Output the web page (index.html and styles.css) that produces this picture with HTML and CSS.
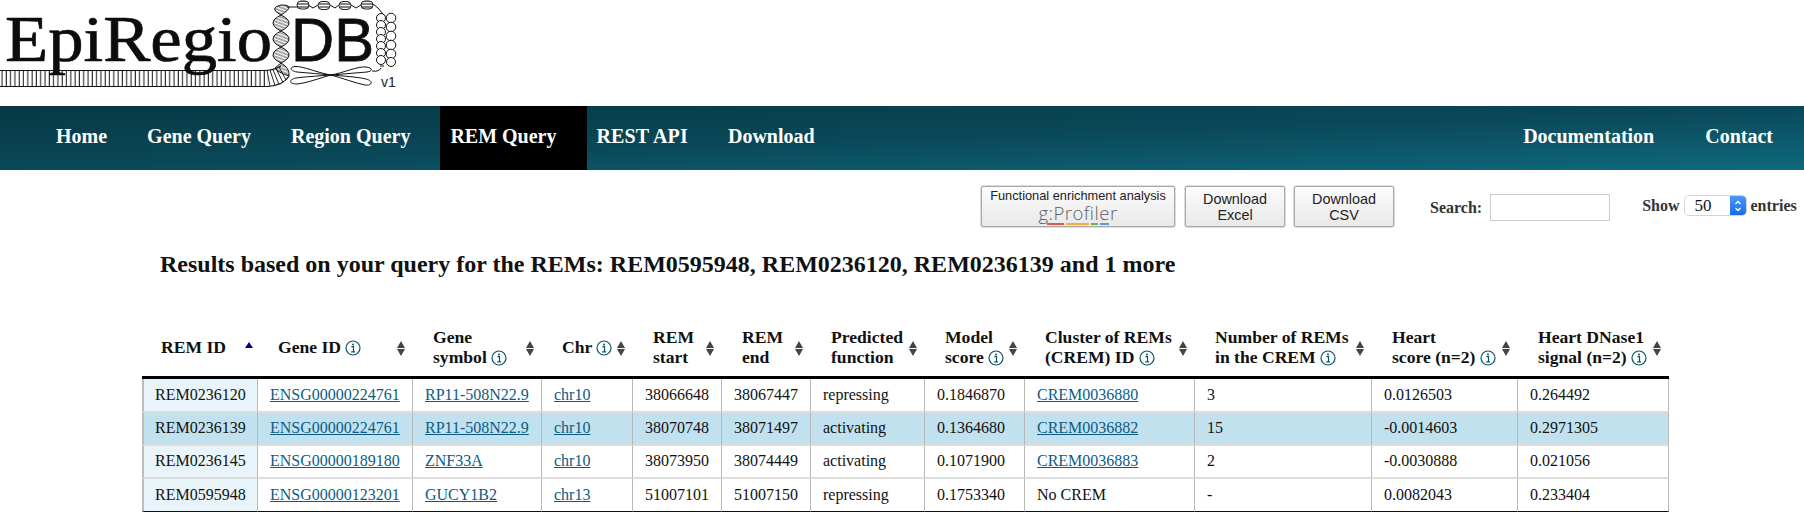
FILE: index.html
```html
<!DOCTYPE html>
<html lang="en">
<head>
<meta charset="utf-8">
<title>EpiRegioDB</title>
<link rel="stylesheet" href="styles.css">
</head>
<body>
<svg class="defs" width="0" height="0" aria-hidden="true">
  <defs>
    <pattern id="ladder" width="4.3" height="20" patternUnits="userSpaceOnUse"><line x1="2" y1="0" x2="2" y2="20" stroke="#111" stroke-width="1"/></pattern>
    <pattern id="hatch" width="3" height="3" patternUnits="userSpaceOnUse" patternTransform="rotate(20)"><line x1="0" y1="1" x2="3" y2="1" stroke="#222" stroke-width=".8"/></pattern>
    <pattern id="nuc" width="3" height="3" patternUnits="userSpaceOnUse"><line x1="0" y1="1" x2="3" y2="1" stroke="#333" stroke-width="1.2"/></pattern>
    <symbol id="info" viewBox="0 0 16 16">
      <circle cx="8" cy="8" r="7" fill="none" stroke="#0b5563" stroke-width="1.2"/>
      <circle cx="8" cy="4.4" r="1" fill="#0b5563"/>
      <path d="M6.4 6.7H8.5V11.6M6.2 11.9H10" fill="none" stroke="#0b5563" stroke-width="1.2"/>
    </symbol>
  </defs>
</svg>

<header class="logo-bar">
  <svg class="logo" width="410" height="95" viewBox="0 0 410 95">
    <rect x="0" y="70.500" width="268" height="16" fill="url(#ladder)"/>
    <path d="M0 70.500H263Q274 70.500 281 66M0 86.500H268Q284 85 289 76" fill="none" stroke="#111" stroke-width="1.200"/>
    <path d="M267 70.500 270 86M270 70 275 85.500M273 69.500 279 84.500M276 68.500 283 82.500M279 67 286 80" stroke="#111" stroke-width=".9" fill="none"/>
    <text class="logo-serif" x="5" y="61" textLength="267" lengthAdjust="spacingAndGlyphs">EpiRegio</text>
    <text class="logo-sans" x="291" y="61" textLength="83" lengthAdjust="spacingAndGlyphs">DB</text>
    <text class="logo-ver" x="381" y="87">v1</text>
    <g fill="url(#hatch)" stroke="#111" stroke-width="1">
      <path d="M281 5Q297 5 281 15Q268 8 281 5Z"/>
      <path d="M281 15Q297 23 281 31Q265 23 281 15Z"/>
      <path d="M281 31Q297 39 281 47Q265 39 281 31Z"/>
      <path d="M281 47Q297 55 281 63Q265 55 281 47Z"/>
      <path d="M281 63Q290 68 289 76Q277 72 275 68Z"/>
    </g>
    <path d="M287 7H297M308 5 L313 8 318 5M330 5 L335 8 339 5M351 5 L356 8 361 5M373 4 Q378 7 383 14M372 71 Q379 72 381 68M380 66 L384 66" fill="none" stroke="#111" stroke-width="1"/>
    <g fill="url(#nuc)" stroke="#222" stroke-width="1">
      <rect x="297" y="1" width="12" height="8" rx="4"/>
      <rect x="318" y="1.500" width="12" height="8" rx="4"/>
      <rect x="339" y="1.500" width="12" height="8" rx="4"/>
      <rect x="361" y="1" width="12" height="8" rx="4"/>
    </g>
    <g fill="#fff" stroke="#111" stroke-width="1">
      <circle cx="391" cy="18" r="4.800"/><circle cx="391" cy="27" r="4.800"/><circle cx="391" cy="36" r="4.800"/><circle cx="391" cy="45" r="4.800"/><circle cx="391" cy="54" r="4.800"/><circle cx="391" cy="62" r="4.500"/>
      <circle cx="381" cy="18" r="4.500"/><circle cx="381" cy="25" r="4.500"/><circle cx="381" cy="32" r="4.500"/><circle cx="381" cy="39" r="4.500"/><circle cx="381" cy="46" r="4.500"/><circle cx="381" cy="53" r="4.500"/><circle cx="381" cy="60" r="4.500"/>
    </g>
    <g fill="#fff" stroke="#111" stroke-width="1">
      <path d="M331 75C318 73 303 66 295 66.500C289 67 290 71 297 72C309 73 320 74 331 75Z"/>
      <path d="M331 75C318 76 302 77 296 78C288 80 289 84 297 84C307 83 320 78 331 75Z"/>
      <path d="M331 75C343 73 358 66 366 67C373 68 373 71 367 72C355 73 343 74 331 75Z"/>
      <path d="M331 75C343 76 358 77 366 79C374 81 372 86 365 85C355 83 342 78 331 75Z"/>
    </g>
  </svg>
</header>

<nav class="nav">
  <a class="nav-link" href="#">Home</a>
  <a class="nav-link" href="#">Gene Query</a>
  <a class="nav-link" href="#">Region Query</a>
  <a class="nav-link nav-active" href="#">REM Query</a>
  <a class="nav-link nav-rest" href="#">REST API</a>
  <a class="nav-link" href="#">Download</a>
  <a class="nav-link nav-doc" href="#">Documentation</a>
  <a class="nav-link" href="#">Contact</a>
</nav>

<div class="toolbar">
  <button class="btn btn-gp">
    <span class="gp-title">Functional enrichment analysis</span>
    <span class="gp-name">g:Profiler</span>
    <span class="gp-bars"><i class="bar bar-r"></i><i class="bar bar-o"></i><i class="bar bar-g"></i><i class="bar bar-b"></i></span>
  </button>
  <button class="btn btn-dl">Download<br>Excel</button>
  <button class="btn btn-dl btn-csv">Download<br>CSV</button>
  <label class="search">Search:<input class="search-input" type="text"></label>
  <div class="length">Show
    <span class="select"><span class="select-val">50</span><span class="select-arrows"><svg width="10" height="14" viewBox="0 0 10 14"><path d="M2.500 5 5 2.500 7.500 5M2.500 9 5 11.500 7.500 9" fill="none" stroke="#fff" stroke-width="1.300"/></svg></span></span>
    entries</div>
</div>

<h2 class="title">Results based on your query for the REMs: REM0595948, REM0236120, REM0236139 and 1 more</h2>

<table class="results">
  <colgroup>
    <col class="c1"><col class="c2"><col class="c3"><col class="c4"><col class="c5"><col class="c6"><col class="c7"><col class="c8"><col class="c9"><col class="c10"><col class="c11"><col class="c12">
  </colgroup>
  <thead>
    <tr>
      <th class="sorted">REM ID</th>
      <th class="sort">Gene ID <svg class="info"><use href="#info"/></svg></th>
      <th class="sort">Gene<br>symbol <svg class="info"><use href="#info"/></svg></th>
      <th class="sort">Chr <svg class="info"><use href="#info"/></svg></th>
      <th class="sort">REM<br>start</th>
      <th class="sort">REM<br>end</th>
      <th class="sort">Predicted<br>function</th>
      <th class="sort">Model<br>score <svg class="info"><use href="#info"/></svg></th>
      <th class="sort">Cluster of REMs<br>(CREM) ID <svg class="info"><use href="#info"/></svg></th>
      <th class="sort">Number of REMs<br>in the CREM <svg class="info"><use href="#info"/></svg></th>
      <th class="sort">Heart<br>score (n=2) <svg class="info"><use href="#info"/></svg></th>
      <th class="sort">Heart DNase1<br>signal (n=2) <svg class="info"><use href="#info"/></svg></th>
    </tr>
  </thead>
  <tbody>
    <tr>
      <td>REM0236120</td><td><a href="#">ENSG00000224761</a></td><td><a href="#">RP11-508N22.9</a></td><td><a href="#">chr10</a></td><td>38066648</td><td>38067447</td><td>repressing</td><td>0.1846870</td><td><a href="#">CREM0036880</a></td><td>3</td><td>0.0126503</td><td>0.264492</td>
    </tr>
    <tr class="hl">
      <td>REM0236139</td><td><a href="#">ENSG00000224761</a></td><td><a href="#">RP11-508N22.9</a></td><td><a href="#">chr10</a></td><td>38070748</td><td>38071497</td><td>activating</td><td>0.1364680</td><td><a href="#">CREM0036882</a></td><td>15</td><td>-0.0014603</td><td>0.2971305</td>
    </tr>
    <tr>
      <td>REM0236145</td><td><a href="#">ENSG00000189180</a></td><td><a href="#">ZNF33A</a></td><td><a href="#">chr10</a></td><td>38073950</td><td>38074449</td><td>activating</td><td>0.1071900</td><td><a href="#">CREM0036883</a></td><td>2</td><td>-0.0030888</td><td>0.021056</td>
    </tr>
    <tr>
      <td>REM0595948</td><td><a href="#">ENSG00000123201</a></td><td><a href="#">GUCY1B2</a></td><td><a href="#">chr13</a></td><td>51007101</td><td>51007150</td><td>repressing</td><td>0.1753340</td><td>No CREM</td><td>-</td><td>0.0082043</td><td>0.233404</td>
    </tr>
  </tbody>
</table>
</body>
</html>
```

FILE: styles.css
```css
* { box-sizing: border-box; }
html, body { margin: 0; padding: 0; height: 515px; overflow: hidden; background: #fff; }
body { font-family: "Liberation Serif", "Times New Roman", serif; font-size: 16px; color: #111; }
.defs { position: absolute; }

.logo-bar { height: 106px; }
.logo { display: block; }
.logo-serif { font-family: "Liberation Serif", serif; font-size: 66px; fill: #0c0c0c; stroke: #0c0c0c; stroke-width: .7px; }
.logo-sans { font-family: "Liberation Sans", sans-serif; font-size: 62px; fill: #0c0c0c; stroke: #0c0c0c; stroke-width: .8px; }
.logo-ver { font-family: "Liberation Sans", sans-serif; font-size: 14px; fill: #222; }

.nav { display: flex; height: 64px; padding: 0 11px 0 36px; background: linear-gradient(178deg, #073845 0%, #0a4858 50%, #0f697e 100%); }
.nav-link { display: flex; align-items: center; padding: 0 20px 4px; color: #fff; font-size: 20px; font-weight: bold; text-decoration: none; }
.nav-active { margin-left: 10px; padding: 0 30px 4px 10px; background: #000; }
.nav-rest { padding-left: 10px; letter-spacing: .15px; }
.nav-doc { margin-left: auto; padding-right: 31px; }

.toolbar { display: flex; align-items: flex-start; height: 79px; padding: 16px 0 0 981px; }
.btn { height: 41px; padding: 1px 0 0; border: 1px solid #a9a9a9; border-radius: 2px; background: linear-gradient(#fcfcfc, #e9e9e9); color: #222; font-family: "Liberation Sans", Arial, sans-serif; font-size: 14.400px; line-height: 16px; box-shadow: 0 0 0 .5px #bbb; }
.btn-gp { display: flex; flex-direction: column; align-items: center; width: 194px; padding-top: 0; }
.gp-title { font-size: 12.800px; line-height: 15px; margin-top: 1px; color: #222; }
.gp-name { font-family: "Open Sans", sans-serif; font-weight: 300; font-size: 18.500px; line-height: 20px; color: #5f5f5f; letter-spacing: .5px; }
.gp-bars { display: flex; gap: 2px; margin-top: 0; }
.bar { display: block; height: 2px; }
.bar-r { width: 17px; background: #dd5a43; }
.bar-o { width: 23px; background: #f4ac45; }
.bar-g { width: 7px; background: #68b35a; }
.bar-b { width: 9px; background: #6a96dc; }
.btn-dl { width: 100px; margin-left: 10px; }
.btn-csv { margin-left: 9px; }

.search { display: flex; align-items: center; margin: 8px 0 0 36px; font-weight: bold; color: #333; height: 27px; }
.search-input { width: 120px; height: 27px; margin-left: 8px; border: 1px solid #ccc; background: #fff; }
.length { display: flex; align-items: center; margin: 9px 0 0 32px; height: 21px; font-weight: bold; color: #333; white-space: nowrap; }
.select { display: flex; width: 63px; height: 21px; margin: 0 4px; border: 1px solid #d5d5d5; border-radius: 5px; background: #fff; overflow: hidden; font-weight: normal; color: #111; font-size: 17px; }
.select-val { flex: 1; padding-left: 10px; line-height: 19px; }
.select-arrows { display: flex; align-items: center; justify-content: center; width: 17px; background: linear-gradient(#4d9bf8, #1668ef); margin: -1px; }

.title { height: 30px; margin: 0 0 41px 160px; font-size: 24px; line-height: 30px; font-weight: bold; color: #111; }

.results { table-layout: fixed; width: 1527px; margin-left: 142px; border-collapse: separate; border-spacing: 0; }
.c1 { width: 116px; } .c2 { width: 155px; } .c3 { width: 129px; } .c4 { width: 91px; } .c5 { width: 89px; } .c6 { width: 89px; }
.c7 { width: 114px; } .c8 { width: 100px; } .c9 { width: 170px; } .c10 { width: 177px; } .c11 { width: 146px; } .c12 { width: 151px; }

th { position: relative; height: 59px; padding: 0 20px 3px 20px; border-bottom: 3px solid #000; font-size: 17.600px; line-height: 20px; font-weight: bold; text-align: left; color: #111; white-space: nowrap; }
th:first-child { padding-left: 19px; }
.info { display: inline-block; width: 16px; height: 16px; vertical-align: -3px; }
.sort::before, .sort::after { content: ""; position: absolute; right: 8px; border-left: 4.500px solid transparent; border-right: 4.500px solid transparent; }
.sort::before { top: 21px; border-bottom: 7px solid #444; }
.sort::after { top: 29px; border-top: 7px solid #444; }
.sorted::after { content: ""; position: absolute; right: 5px; top: 22px; border-left: 4.500px solid transparent; border-right: 4.500px solid transparent; border-bottom: 6px solid #00007f; }

td { height: 33px; padding: 0 4px 1px 12px; border-right: 1px solid #b7b7b7; border-bottom: 2px solid #dddddd; font-size: 16px; line-height: 18px; color: #111; white-space: nowrap; background: #fff; }
tbody tr:first-child td { height: 34px; }
td:first-child { padding-left: 11px; border-left: 2px solid #bcbcbc; background: #e8f4fa; }
.hl td { background: #c2e1ef; }
.hl td:first-child { background: #c2e1ef; }
tbody tr:last-child td { border-bottom: 1px solid #111; }
td a { color: #0a5c86; text-decoration: underline; }
```
